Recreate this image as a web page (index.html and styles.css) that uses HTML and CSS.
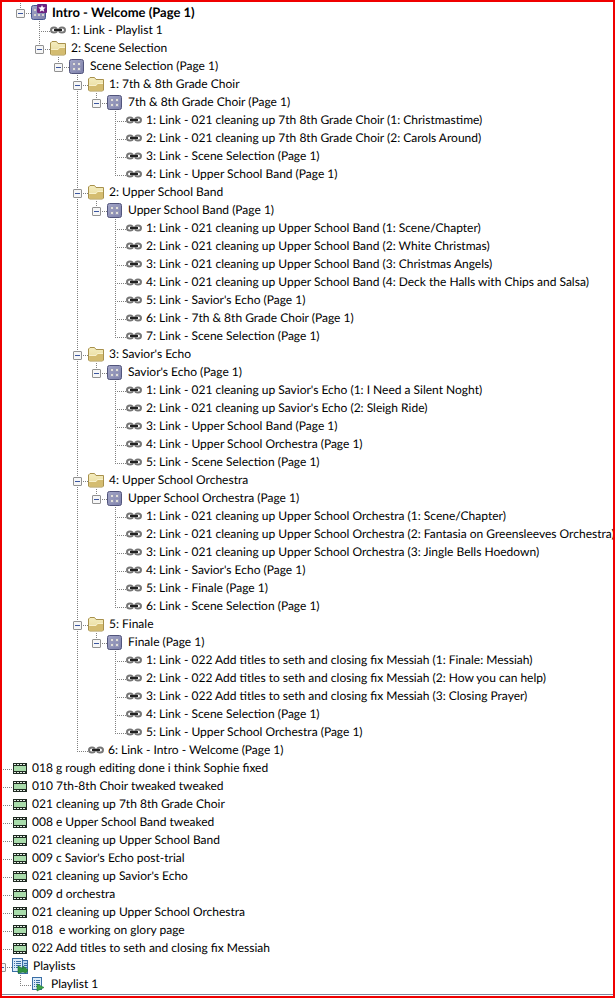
FILE: index.html
```
<!DOCTYPE html>
<html lang="en">
<head>
    <meta charset="UTF-8">
    <meta name="viewport" content="width=device-width, initial-scale=1.0">
    <title>DVD Project</title>
    <link rel="stylesheet" href="styles.css">
</head>
<body>
    <svg class="sprite" aria-hidden="true">
        <defs>
            <linearGradient id="folder-fill" x1="0" y1="0" x2="0" y2="1">
                <stop offset="0" stop-color="#f5edc0"/>
                <stop offset="1" stop-color="#e6d898"/>
            </linearGradient>
            <linearGradient id="menu-fill" x1="0" y1="0" x2="1" y2="1">
                <stop offset="0" stop-color="#a3a6c8"/>
                <stop offset="1" stop-color="#7d80aa"/>
            </linearGradient>
        </defs>
        <symbol id="menu" viewBox="0 0 16 16">
            <rect x=".5" y="1.500" width="14" height="14" rx="2" fill="url(#menu-fill)" stroke="#52557c"/>
            <path d="M3 4h4v4H3zM8 4h4v4H8zM3 9h4v4H3zM8 9h4v4H8z" fill="#9799b8"/>
            <path d="M4 5h2v2H4zM9 5h2v2H9zM4 10h2v2H4zM9 10h2v2H9z" fill="#e2e0da"/>
        </symbol>
        <symbol id="menu-first" viewBox="0 0 16 16">
            <rect x=".5" y="1.500" width="14" height="14" rx="2" fill="url(#menu-fill)" stroke="#44548f"/>
            <path d="M3 5h2v2H3zM3 10h2v2H3zM7 10h2v2H7zM11 10h2v2h-2z" fill="#d5d3cf"/>
            <rect x="6" y="0" width="10" height="9" rx="1" fill="#6b2380"/>
            <path d="M11 1l1 2.300 2.600.2-2 1.700.6 2.600L11 6.500 8.800 7.800l.6-2.600-2-1.700 2.600-.2z" fill="#fff"/>
        </symbol>
        <symbol id="folder" viewBox="0 0 16 16">
            <path d="M.5 14V3L2 1.500h4.500L8 3.500h7.500V14l-1 1H1.500z" fill="url(#folder-fill)" stroke="#a8914c"/>
            <path d="M1 9.500h7L9.500 8H15v6l-1 .5H1.500z" fill="#d4bc70"/>
            <path d="M1 9.500h7L9.500 7.500H15" fill="none" stroke="#f8f1cb"/>
        </symbol>
        <symbol id="link" viewBox="0 0 16 16">
            <ellipse cx="4" cy="8" rx="3" ry="2.500" fill="none" stroke="#777" stroke-width="2"/>
            <ellipse cx="12" cy="8" rx="3" ry="2.500" fill="none" stroke="#777" stroke-width="2"/>
            <path d="M4 8h8" stroke="#222" stroke-width="2"/>
        </symbol>
        <symbol id="film" viewBox="0 0 16 16">
            <rect x="1" y="3" width="14" height="11" fill="#1f2a22"/>
            <rect x="2" y="6" width="12" height="5" fill="#a9dcab"/>
            <path d="M2 4h2v1H2zM5 4h2v1H5zM8 4h2v1H8zM11 4h2v1h-2zM2 12h2v1H2zM5 12h2v1H5zM8 12h2v1H8zM11 12h2v1h-2z" fill="#e6efe6"/>
        </symbol>
        <symbol id="playlist" viewBox="0 0 16 16">
            <rect x="1.500" y="1.500" width="9" height="12" fill="#dcecfa" stroke="#3a6ea5"/>
            <path d="M3 4.500h1M5 4.500h4M3 6.500h1M5 6.500h4M3 8.500h1M5 8.500h4M3 10.500h1M5 10.500h2" stroke="#3a6ea5"/>
            <path d="M6 8l7 3.500L6 15z" fill="#3fa548" stroke="#237a30" stroke-width=".6"/>
        </symbol>
        <symbol id="playlists" viewBox="0 0 16 16">
            <rect x="6.500" y="2.500" width="9" height="13" fill="#b9d7f2" stroke="#3a6ea5"/>
            <path d="M12 5.500h3M12 7.500h3M12 9.500h3" stroke="#3a6ea5"/>
            <rect x=".5" y=".5" width="10" height="13" fill="#dcecfa" stroke="#3a6ea5"/>
            <path d="M2 3.500h1M4 3.500h5M2 5.500h1M4 5.500h5M2 7.500h1M4 7.500h5M2 9.500h1M4 9.500h3" stroke="#3a6ea5"/>
            <path d="M6 8l5 2.500V8l5 4-2 3-3-1-5 1z" fill="#2f9440" stroke="#1c6b2a" stroke-width=".6"/>
        </symbol>
    </svg>

    <main class="panel">
        <ul class="tree">
            <li>
                <ul>
                    <li>
                        <div class="row"><button class="toggle" aria-label="Collapse"></button><svg class="icon"><use href="#menu-first"/></svg><b>Intro - Welcome (Page 1)</b></div>
                        <ul>
                            <li><div class="row"><svg class="icon"><use href="#link"/></svg><span>1: Link - Playlist 1</span></div></li>
                            <li>
                                <div class="row"><button class="toggle" aria-label="Collapse"></button><svg class="icon"><use href="#folder"/></svg><span>2: Scene Selection</span></div>
                                <ul>
                                    <li>
                                        <div class="row"><button class="toggle" aria-label="Collapse"></button><svg class="icon"><use href="#menu"/></svg><span>Scene Selection (Page 1)</span></div>
                                        <ul>
                                            <li>
                                                <div class="row"><button class="toggle" aria-label="Collapse"></button><svg class="icon"><use href="#folder"/></svg><span>1: 7th &amp; 8th Grade Choir</span></div>
                                                <ul>
                                                    <li>
                                                        <div class="row"><button class="toggle" aria-label="Collapse"></button><svg class="icon"><use href="#menu"/></svg><span>7th &amp; 8th Grade Choir (Page 1)</span></div>
                                                        <ul>
                                                            <li><div class="row"><svg class="icon"><use href="#link"/></svg><span>1: Link - 021 cleaning up 7th 8th Grade Choir (1: Christmastime)</span></div></li>
                                                            <li><div class="row"><svg class="icon"><use href="#link"/></svg><span>2: Link - 021 cleaning up 7th 8th Grade Choir (2: Carols Around)</span></div></li>
                                                            <li><div class="row"><svg class="icon"><use href="#link"/></svg><span>3: Link - Scene Selection (Page 1)</span></div></li>
                                                            <li><div class="row"><svg class="icon"><use href="#link"/></svg><span>4: Link - Upper School Band (Page 1)</span></div></li>
                                                        </ul>
                                                    </li>
                                                </ul>
                                            </li>
                                            <li>
                                                <div class="row"><button class="toggle" aria-label="Collapse"></button><svg class="icon"><use href="#folder"/></svg><span>2: Upper School Band</span></div>
                                                <ul>
                                                    <li>
                                                        <div class="row"><button class="toggle" aria-label="Collapse"></button><svg class="icon"><use href="#menu"/></svg><span>Upper School Band (Page 1)</span></div>
                                                        <ul>
                                                            <li><div class="row"><svg class="icon"><use href="#link"/></svg><span>1: Link - 021 cleaning up Upper School Band (1: Scene/Chapter)</span></div></li>
                                                            <li><div class="row"><svg class="icon"><use href="#link"/></svg><span>2: Link - 021 cleaning up Upper School Band (2: White Christmas)</span></div></li>
                                                            <li><div class="row"><svg class="icon"><use href="#link"/></svg><span>3: Link - 021 cleaning up Upper School Band (3: Christmas Angels)</span></div></li>
                                                            <li><div class="row"><svg class="icon"><use href="#link"/></svg><span>4: Link - 021 cleaning up Upper School Band (4: Deck the Halls with Chips and Salsa)</span></div></li>
                                                            <li><div class="row"><svg class="icon"><use href="#link"/></svg><span>5: Link - Savior's Echo (Page 1)</span></div></li>
                                                            <li><div class="row"><svg class="icon"><use href="#link"/></svg><span>6: Link - 7th &amp; 8th Grade Choir (Page 1)</span></div></li>
                                                            <li><div class="row"><svg class="icon"><use href="#link"/></svg><span>7: Link - Scene Selection (Page 1)</span></div></li>
                                                        </ul>
                                                    </li>
                                                </ul>
                                            </li>
                                            <li>
                                                <div class="row"><button class="toggle" aria-label="Collapse"></button><svg class="icon"><use href="#folder"/></svg><span>3: Savior's Echo</span></div>
                                                <ul>
                                                    <li>
                                                        <div class="row"><button class="toggle" aria-label="Collapse"></button><svg class="icon"><use href="#menu"/></svg><span>Savior's Echo (Page 1)</span></div>
                                                        <ul>
                                                            <li><div class="row"><svg class="icon"><use href="#link"/></svg><span>1: Link - 021 cleaning up Savior's Echo (1: I Need a Silent Noght)</span></div></li>
                                                            <li><div class="row"><svg class="icon"><use href="#link"/></svg><span>2: Link - 021 cleaning up Savior's Echo (2: Sleigh Ride)</span></div></li>
                                                            <li><div class="row"><svg class="icon"><use href="#link"/></svg><span>3: Link - Upper School Band (Page 1)</span></div></li>
                                                            <li><div class="row"><svg class="icon"><use href="#link"/></svg><span>4: Link - Upper School Orchestra (Page 1)</span></div></li>
                                                            <li><div class="row"><svg class="icon"><use href="#link"/></svg><span>5: Link - Scene Selection (Page 1)</span></div></li>
                                                        </ul>
                                                    </li>
                                                </ul>
                                            </li>
                                            <li>
                                                <div class="row"><button class="toggle" aria-label="Collapse"></button><svg class="icon"><use href="#folder"/></svg><span>4: Upper School Orchestra</span></div>
                                                <ul>
                                                    <li>
                                                        <div class="row"><button class="toggle" aria-label="Collapse"></button><svg class="icon"><use href="#menu"/></svg><span>Upper School Orchestra (Page 1)</span></div>
                                                        <ul>
                                                            <li><div class="row"><svg class="icon"><use href="#link"/></svg><span>1: Link - 021 cleaning up Upper School Orchestra (1: Scene/Chapter)</span></div></li>
                                                            <li><div class="row"><svg class="icon"><use href="#link"/></svg><span>2: Link - 021 cleaning up Upper School Orchestra (2: Fantasia on Greensleeves Orchestra)</span></div></li>
                                                            <li><div class="row"><svg class="icon"><use href="#link"/></svg><span>3: Link - 021 cleaning up Upper School Orchestra (3: Jingle Bells Hoedown)</span></div></li>
                                                            <li><div class="row"><svg class="icon"><use href="#link"/></svg><span>4: Link - Savior's Echo (Page 1)</span></div></li>
                                                            <li><div class="row"><svg class="icon"><use href="#link"/></svg><span>5: Link - Finale (Page 1)</span></div></li>
                                                            <li><div class="row"><svg class="icon"><use href="#link"/></svg><span>6: Link - Scene Selection (Page 1)</span></div></li>
                                                        </ul>
                                                    </li>
                                                </ul>
                                            </li>
                                            <li>
                                                <div class="row"><button class="toggle" aria-label="Collapse"></button><svg class="icon"><use href="#folder"/></svg><span>5: Finale</span></div>
                                                <ul>
                                                    <li>
                                                        <div class="row"><button class="toggle" aria-label="Collapse"></button><svg class="icon"><use href="#menu"/></svg><span>Finale (Page 1)</span></div>
                                                        <ul>
                                                            <li><div class="row"><svg class="icon"><use href="#link"/></svg><span>1: Link - 022 Add titles to seth and closing fix Messiah (1: Finale: Messiah)</span></div></li>
                                                            <li><div class="row"><svg class="icon"><use href="#link"/></svg><span>2: Link - 022 Add titles to seth and closing fix Messiah (2: How you can help)</span></div></li>
                                                            <li><div class="row"><svg class="icon"><use href="#link"/></svg><span>3: Link - 022 Add titles to seth and closing fix Messiah (3: Closing Prayer)</span></div></li>
                                                            <li><div class="row"><svg class="icon"><use href="#link"/></svg><span>4: Link - Scene Selection (Page 1)</span></div></li>
                                                            <li><div class="row"><svg class="icon"><use href="#link"/></svg><span>5: Link - Upper School Orchestra (Page 1)</span></div></li>
                                                        </ul>
                                                    </li>
                                                </ul>
                                            </li>
                                            <li><div class="row"><svg class="icon"><use href="#link"/></svg><span>6: Link - Intro - Welcome (Page 1)</span></div></li>
                                        </ul>
                                    </li>
                                </ul>
                            </li>
                        </ul>
                    </li>
                </ul>
            </li>
            <li><div class="row"><svg class="icon"><use href="#film"/></svg><span>018 g rough editing done i think Sophie fixed</span></div></li>
            <li><div class="row"><svg class="icon"><use href="#film"/></svg><span>010 7th-8th Choir tweaked tweaked</span></div></li>
            <li><div class="row"><svg class="icon"><use href="#film"/></svg><span>021 cleaning up 7th 8th Grade Choir</span></div></li>
            <li><div class="row"><svg class="icon"><use href="#film"/></svg><span>008 e Upper School Band tweaked</span></div></li>
            <li><div class="row"><svg class="icon"><use href="#film"/></svg><span>021 cleaning up Upper School Band</span></div></li>
            <li><div class="row"><svg class="icon"><use href="#film"/></svg><span>009 c Savior's Echo post-trial</span></div></li>
            <li><div class="row"><svg class="icon"><use href="#film"/></svg><span>021 cleaning up Savior's Echo</span></div></li>
            <li><div class="row"><svg class="icon"><use href="#film"/></svg><span>009 d orchestra</span></div></li>
            <li><div class="row"><svg class="icon"><use href="#film"/></svg><span>021 cleaning up Upper School Orchestra</span></div></li>
            <li><div class="row"><svg class="icon"><use href="#film"/></svg><span>018  e working on glory page</span></div></li>
            <li><div class="row"><svg class="icon"><use href="#film"/></svg><span>022 Add titles to seth and closing fix Messiah</span></div></li>
            <li>
                <div class="row"><button class="toggle" aria-label="Collapse"></button><svg class="icon"><use href="#playlists"/></svg><span>Playlists</span></div>
                <ul>
                    <li><div class="row"><svg class="icon"><use href="#playlist"/></svg><span>Playlist 1</span></div></li>
                </ul>
            </li>
        </ul>
    </main>
</body>
</html>
```
FILE: styles.css
```
* {
    box-sizing: border-box;
}
body {
    margin: 0;
    background: #fff;
    color: #000;
    font: 12px/18px Lato, "Open Sans", sans-serif;
    text-rendering: geometricPrecision;
}
.sprite {
    display: block;
    width: 0;
    height: 0;
}
.panel {
    min-height: 100vh;
    border: 2px solid #f00000;
    padding-top: 1px;
    overflow: hidden;
}
.tree {
    margin-left: -5px;
    border-bottom: 1px solid #8088a0;
    padding-bottom: 1px;
}
ul {
    margin: 0;
    padding: 0;
    list-style: none;
}
ul ul {
    margin-left: 19px;
}
b {
    font-size: 13px;
}
/* dotted guide running down beside the items of one level */
li {
    background: repeating-linear-gradient(to bottom, #808080 0 1px, transparent 1px 2px) 4px 0 / 1px 100% no-repeat;
}
li:last-child {
    background-size: 1px 10px;
}
.row {
    display: flex;
    align-items: center;
    height: 18px;
    white-space: pre;
    background: repeating-linear-gradient(to right, #808080 0 1px, transparent 1px 2px) 4px 10px / 11px 1px no-repeat;
}
.icon {
    flex: none;
    width: 16px;
    height: 16px;
    margin: 0 4px 0 15px;
}
.toggle {
    flex: none;
    width: 9px;
    height: 9px;
    margin: 2px 0 0;
    padding: 0;
    border: 1px solid #919191;
    border-radius: 1px;
    background: linear-gradient(#3b56a0, #3b56a0) center / 5px 1px no-repeat #f6f6f6;
    cursor: pointer;
}
.toggle + .icon {
    margin: 0 5px 0 6px;
}
```
